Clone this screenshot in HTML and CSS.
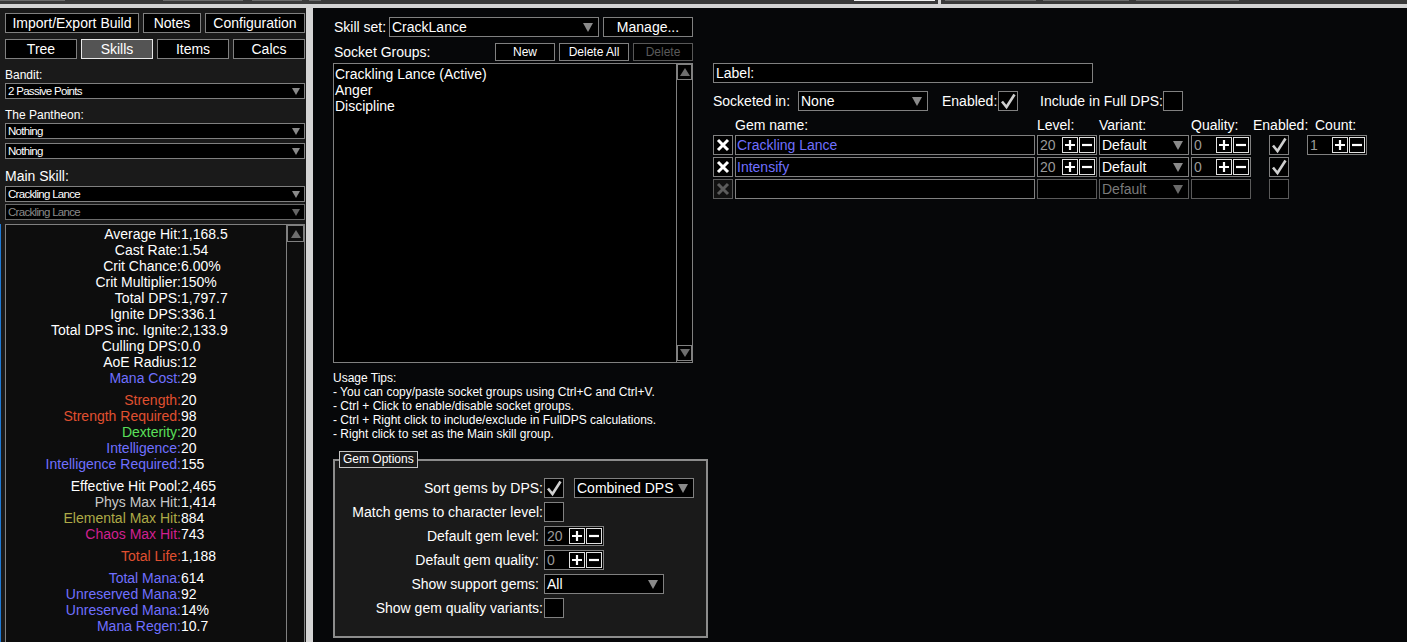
FILE: index.html
```html
<!DOCTYPE html>
<html lang="en">
<head>
<meta charset="utf-8">
<title>Path of Building - Skills</title>
<link rel="stylesheet" href="styles.css">
</head>
<body>
<div class="topbar">
  <span class="stub st1"></span>
  <span class="stub st2"></span>
  <span class="stub st3"></span>
  <span class="stub st4"></span>
  <span class="stub st5 white"></span>
  <span class="tbsep"></span>
  <span class="stub st6"></span>
  <span class="stub st7"></span>
  <span class="stub st8"></span>
</div>
<div class="hline"></div>
<div class="main">
  <aside class="side">
    <div class="row r1">
      <div class="btn b-import">Import/Export Build</div>
      <div class="btn b-notes">Notes</div>
      <div class="btn b-config">Configuration</div>
    </div>
    <div class="row r2">
      <div class="btn tab">Tree</div>
      <div class="btn tab sel">Skills</div>
      <div class="btn tab">Items</div>
      <div class="btn tab">Calcs</div>
    </div>
    <div class="slabel">Bandit:</div>
    <div class="sdrop"><span>2 Passive Points</span><i class="arr"></i></div>
    <div class="slabel">The Pantheon:</div>
    <div class="sdrop"><span>Nothing</span><i class="arr"></i></div>
    <div class="sdrop mt4"><span>Nothing</span><i class="arr"></i></div>
    <div class="slabel big">Main Skill:</div>
    <div class="sdrop mt1"><span>Crackling Lance</span><i class="arr"></i></div>
    <div class="sdrop dis mt2"><span>Crackling Lance</span><i class="arr"></i></div>
    <div class="stats">
      <div class="stat-list">
        <span class="k">Average Hit:</span><span class="v">1,168.5</span>
        <span class="k">Cast Rate:</span><span class="v">1.54</span>
        <span class="k">Crit Chance:</span><span class="v">6.00%</span>
        <span class="k">Crit Multiplier:</span><span class="v">150%</span>
        <span class="k">Total DPS:</span><span class="v">1,797.7</span>
        <span class="k">Ignite DPS:</span><span class="v">336.1</span>
        <span class="k">Total DPS inc. Ignite:</span><span class="v">2,133.9</span>
        <span class="k">Culling DPS:</span><span class="v">0.0</span>
        <span class="k">AoE Radius:</span><span class="v">12</span>
        <span class="k mana">Mana Cost:</span><span class="v">29</span>
        <span class="gap"></span>
        <span class="k str">Strength:</span><span class="v">20</span>
        <span class="k str">Strength Required:</span><span class="v">98</span>
        <span class="k dex">Dexterity:</span><span class="v">20</span>
        <span class="k int">Intelligence:</span><span class="v">20</span>
        <span class="k int">Intelligence Required:</span><span class="v">155</span>
        <span class="gap"></span>
        <span class="k">Effective Hit Pool:</span><span class="v">2,465</span>
        <span class="k phys">Phys Max Hit:</span><span class="v">1,414</span>
        <span class="k ele">Elemental Max Hit:</span><span class="v">884</span>
        <span class="k chaos">Chaos Max Hit:</span><span class="v">743</span>
        <span class="gap"></span>
        <span class="k life">Total Life:</span><span class="v">1,188</span>
        <span class="gap"></span>
        <span class="k mana">Total Mana:</span><span class="v">614</span>
        <span class="k mana">Unreserved Mana:</span><span class="v">92</span>
        <span class="k mana">Unreserved Mana:</span><span class="v">14%</span>
        <span class="k mana">Mana Regen:</span><span class="v">10.7</span>
      </div>
      <div class="vscroll">
        <div class="sbtn"><i class="tri-up"></i></div>
      </div>
    </div>
  </aside>
  <div class="vsep"></div>
  <section class="content">
    <div class="col-left">
      <div class="ssrow">
        <span class="ss-label">Skill set:</span>
        <div class="dd dd-skillset"><span>CrackLance</span><i class="arr big"></i></div>
        <div class="btn b-manage">Manage...</div>
      </div>
      <div class="sgrow">
        <span class="sg-label">Socket Groups:</span>
        <div class="btn small b-new">New</div>
        <div class="btn small b-delall">Delete All</div>
        <div class="btn small b-del disabled">Delete</div>
      </div>
      <div class="list">
        <div class="list-items">
          <div>Crackling Lance (Active)</div>
          <div>Anger</div>
          <div>Discipline</div>
        </div>
        <div class="lscroll">
          <div class="sbtn"><i class="tri-up"></i></div>
          <div class="sbtn"><i class="tri-down"></i></div>
        </div>
      </div>
      <div class="tips">
        <div>Usage Tips:</div>
        <div>- You can copy/paste socket groups using Ctrl+C and Ctrl+V.</div>
        <div>- Ctrl + Click to enable/disable socket groups.</div>
        <div>- Ctrl + Right click to include/exclude in FullDPS calculations.</div>
        <div>- Right click to set as the Main skill group.</div>
      </div>
      <div class="gemopts">
        <div class="legend">Gem Options</div>
        <div class="opt-grid">
          <span class="olabel">Sort gems by DPS:</span>
          <div class="octl">
            <div class="chk"><svg viewBox="0 0 18 18" width="18" height="18"><path d="M3 9.5 L7.5 15 L15.5 2.5" fill="none" stroke="#cfcfcf" stroke-width="2.6" stroke-linejoin="miter"/></svg></div>
            <div class="dd dd-combined"><span>Combined DPS</span><i class="arr big"></i></div>
          </div>
          <span class="olabel">Match gems to character level:</span>
          <div class="octl"><div class="chk"></div></div>
          <span class="olabel sp">Default gem level:</span>
          <div class="octl">
            <div class="num w60"><span class="nv">20</span><span class="pm"><svg viewBox="0 0 14 14" width="14" height="14"><path d="M2 7H12M7 2V12" stroke="#fff" stroke-width="2.2"/></svg></span><span class="pm"><svg viewBox="0 0 14 14" width="14" height="14"><path d="M2 7H12" stroke="#fff" stroke-width="2.2"/></svg></span></div>
          </div>
          <span class="olabel sp">Default gem quality:</span>
          <div class="octl">
            <div class="num w60"><span class="nv">0</span><span class="pm"><svg viewBox="0 0 14 14" width="14" height="14"><path d="M2 7H12M7 2V12" stroke="#fff" stroke-width="2.2"/></svg></span><span class="pm"><svg viewBox="0 0 14 14" width="14" height="14"><path d="M2 7H12" stroke="#fff" stroke-width="2.2"/></svg></span></div>
          </div>
          <span class="olabel sp">Show support gems:</span>
          <div class="octl"><div class="dd dd-support"><span>All</span><i class="arr big"></i></div></div>
          <span class="olabel">Show gem quality variants:</span>
          <div class="octl"><div class="chk"></div></div>
        </div>
      </div>
    </div>
    <div class="col-right">
      <div class="labelinput">Label:</div>
      <div class="sockrow">
        <span class="sock-label">Socketed in:</span>
        <div class="dd dd-socket"><span>None</span><i class="arr big"></i></div>
        <span class="en-label">Enabled:</span>
        <div class="chk"><svg viewBox="0 0 18 18" width="18" height="18"><path d="M3 9.5 L7.5 15 L15.5 2.5" fill="none" stroke="#cfcfcf" stroke-width="2.6"/></svg></div>
        <span class="inc-label">Include in Full DPS:</span>
        <div class="chk"></div>
      </div>
      <div class="gems">
        <span class="gh"></span>
        <span class="gh">Gem name:</span>
        <span class="gh">Level:</span>
        <span class="gh">Variant:</span>
        <span class="gh">Quality:</span>
        <span class="gh">Enabled:</span>
        <span class="gh">Count:</span>

        <div class="xbtn"><svg viewBox="0 0 18 18" width="18" height="18"><path d="M4 4L14 14M14 4L4 14" stroke="#fff" stroke-width="3"/></svg></div>
        <div class="gname">Crackling Lance</div>
        <div class="num"><span class="nv">20</span><span class="pm"><svg viewBox="0 0 14 14" width="14" height="14"><path d="M2 7H12M7 2V12" stroke="#fff" stroke-width="2.2"/></svg></span><span class="pm"><svg viewBox="0 0 14 14" width="14" height="14"><path d="M2 7H12" stroke="#fff" stroke-width="2.2"/></svg></span></div>
        <div class="dd"><span>Default</span><i class="arr big"></i></div>
        <div class="num"><span class="nv">0</span><span class="pm"><svg viewBox="0 0 14 14" width="14" height="14"><path d="M2 7H12M7 2V12" stroke="#fff" stroke-width="2.2"/></svg></span><span class="pm"><svg viewBox="0 0 14 14" width="14" height="14"><path d="M2 7H12" stroke="#fff" stroke-width="2.2"/></svg></span></div>
        <div class="chk gchk"><svg viewBox="0 0 18 18" width="18" height="18"><path d="M3 9.5 L7.5 15 L15.5 2.5" fill="none" stroke="#cfcfcf" stroke-width="2.6"/></svg></div>
        <div class="num gcount"><span class="nv">1</span><span class="pm"><svg viewBox="0 0 14 14" width="14" height="14"><path d="M2 7H12M7 2V12" stroke="#fff" stroke-width="2.2"/></svg></span><span class="pm"><svg viewBox="0 0 14 14" width="14" height="14"><path d="M2 7H12" stroke="#fff" stroke-width="2.2"/></svg></span></div>

        <div class="xbtn"><svg viewBox="0 0 18 18" width="18" height="18"><path d="M4 4L14 14M14 4L4 14" stroke="#fff" stroke-width="3"/></svg></div>
        <div class="gname">Intensify</div>
        <div class="num"><span class="nv">20</span><span class="pm"><svg viewBox="0 0 14 14" width="14" height="14"><path d="M2 7H12M7 2V12" stroke="#fff" stroke-width="2.2"/></svg></span><span class="pm"><svg viewBox="0 0 14 14" width="14" height="14"><path d="M2 7H12" stroke="#fff" stroke-width="2.2"/></svg></span></div>
        <div class="dd"><span>Default</span><i class="arr big"></i></div>
        <div class="num"><span class="nv">0</span><span class="pm"><svg viewBox="0 0 14 14" width="14" height="14"><path d="M2 7H12M7 2V12" stroke="#fff" stroke-width="2.2"/></svg></span><span class="pm"><svg viewBox="0 0 14 14" width="14" height="14"><path d="M2 7H12" stroke="#fff" stroke-width="2.2"/></svg></span></div>
        <div class="chk gchk"><svg viewBox="0 0 18 18" width="18" height="18"><path d="M3 9.5 L7.5 15 L15.5 2.5" fill="none" stroke="#cfcfcf" stroke-width="2.6"/></svg></div>
        <span class="empty"></span>

        <div class="xbtn off"><svg viewBox="0 0 18 18" width="18" height="18"><path d="M4 4L14 14M14 4L4 14" stroke="#5c5c5c" stroke-width="3"/></svg></div>
        <div class="gname"></div>
        <div class="num off"></div>
        <div class="dd off"><span>Default</span><i class="arr big"></i></div>
        <div class="num off"></div>
        <div class="chk gchk off"></div>
        <span class="empty"></span>
      </div>
    </div>
  </section>
</div>
</body>
</html>
```

FILE: styles.css
```css
* { box-sizing: border-box; }
html, body { margin: 0; padding: 0; }
body {
  width: 1407px;
  height: 642px;
  overflow: hidden;
  background: #060709;
  color: #ffffff;
  font-family: "Liberation Sans", Arial, sans-serif;
  font-size: 14px;
}

/* top strip */
.topbar { height: 4px; background: #3a3a3a; display: flex; align-items: flex-start; }
.stub { height: 1px; background: #6c6c6c; flex: none; }
.stub.white { background: #f0f0f0; }
.st1 { width: 65px; }
.st2 { width: 80px; margin-left: 98px; }
.st3 { width: 50px; margin-left: 9px; }
.st4 { width: 12px; margin-left: 7px; }
.st5 { width: 81px; margin-left: 533px; }
.tbsep { width: 3px; height: 4px; margin-left: 3px; background: #d4d4d4; flex: none; }
.st6 { width: 91px; margin-left: 4px; }
.st7 { width: 86px; margin-left: 7px; }
.st8 { width: 103px; margin-left: 7px; }
.hline { height: 4px; background: #d4d4d4; }

.main { display: flex; height: 634px; }

/* left side panel */
.side {
  width: 306px;
  flex: none;
  background: #1a1a1a;
  padding: 5px 0 0 5px;
  overflow: hidden;
  position: relative;
}
.side::before {
  content: "";
  position: absolute;
  left: 0;
  top: 216px;
  bottom: 0;
  width: 1px;
  background: #1f7ad6;
}
.vsep { width: 7px; flex: none; background: #d4d4d4; }

.row { display: flex; gap: 4px; }
.r2 { margin-top: 6px; }
.btn {
  height: 20px;
  border: 1px solid #808080;
  background: #000;
  color: #fff;
  font-size: 14px;
  display: flex;
  align-items: center;
  justify-content: center;
  white-space: nowrap;
  flex: none;
}
.b-import { width: 134px; }
.b-notes { width: 58px; }
.b-config { width: 100px; }
.tab { width: 72px; }
.btn.sel { background: #545454; border-color: #e8e8e8; }

.slabel { font-size: 12px; line-height: 16px; height: 16px; margin-top: 8px; color: #fff; }
.slabel.big { font-size: 14px; line-height: 18px; height: 18px; }
.sdrop {
  width: 300px;
  height: 16px;
  border: 1px solid #808080;
  background: #000;
  font-size: 11.5px;
  letter-spacing: -0.7px;
  display: flex;
  align-items: center;
  padding-left: 2px;
  color: #fff;
  white-space: nowrap;
}
.sdrop.dis { color: #8a8a8a; border-color: #6a6a6a; }
.sdrop.dis .arr { border-top-color: #666; }
.mt1 { margin-top: 1px; }
.mt2 { margin-top: 2px; }
.mt4 { margin-top: 4px; }

.arr {
  width: 0; height: 0;
  border-left: 4px solid transparent;
  border-right: 4px solid transparent;
  border-top: 7px solid #8a8a8a;
  margin-left: auto;
  margin-right: 4px;
  flex: none;
}
.arr.big { border-left-width: 5px; border-right-width: 5px; border-top-width: 9px; margin-right: 5px; }

/* stats */
.stats {
  margin-top: 4px;
  width: 300px;
  height: 430px;
  border: 1px solid #808080;
  background: #0d0d0d;
  display: flex;
}
.stat-list {
  flex: 1;
  padding-top: 1px;
  display: grid;
  grid-template-columns: 175px auto;
  align-content: start;
  font-size: 14px;
  line-height: 16px;
  white-space: nowrap;
}
.stat-list .k { text-align: right; color: #fff; }
.stat-list .v { color: #fff; }
.stat-list .gap { grid-column: 1 / 3; height: 6px; }
.k.mana, .k.int { color: #7070ff; }
.k.str, .k.life { color: #e05030; }
.k.dex { color: #5ae05a; }
.k.phys { color: #c8c8c8; }
.k.ele { color: #adaa47; }
.k.chaos { color: #d02090; }

.vscroll { width: 18px; border-left: 1px solid #808080; flex: none; }
.sbtn {
  height: 17px;
  border: 1px solid #808080;
  display: flex;
  align-items: center;
  justify-content: center;
}
.tri-up { width: 0; height: 0; border-left: 5px solid transparent; border-right: 5px solid transparent; border-bottom: 8px solid #6e6e6e; }
.tri-down { width: 0; height: 0; border-left: 5px solid transparent; border-right: 5px solid transparent; border-top: 8px solid #6e6e6e; }

/* content */
.content { flex: 1; display: flex; gap: 5px; padding: 9px 0 0 20px; }
.col-left { width: 375px; flex: none; }
.col-right { padding-top: 46px; }

.ssrow { display: flex; align-items: center; height: 20px; }
.ss-label { width: 56px; font-size: 14px; padding-left: 1px; }
.dd {
  height: 20px;
  border: 1px solid #808080;
  background: #000;
  display: flex;
  align-items: center;
  padding-left: 2px;
  font-size: 14px;
  color: #fff;
  white-space: nowrap;
}
.dd-skillset { width: 210px; }
.b-manage { width: 90px; margin-left: 4px; }

.sgrow { display: flex; align-items: center; width: 360px; height: 18px; margin-top: 6px; gap: 4px; }
.sg-label { flex: 1; padding-left: 1px; }
.btn.small { height: 18px; font-size: 12px; }
.b-new { width: 60px; }
.b-delall { width: 70px; }
.b-del { width: 60px; }
.btn.disabled { color: #5a5a5a; border-color: #585858; }

.list {
  margin-top: 2px;
  width: 360px;
  height: 300px;
  border: 1px solid #808080;
  background: #000;
  display: flex;
}
.list-items { flex: 1; padding: 2px 0 0 1px; font-size: 14px; line-height: 16px; }
.lscroll {
  width: 16px;
  border-left: 1px solid #808080;
  display: flex;
  flex-direction: column;
  justify-content: space-between;
  padding: 0 0 1px 0;
}
.lscroll .sbtn { height: 16px; margin-top: 0; }

.tips { margin-top: 8px; font-size: 12px; line-height: 14px; }

.gemopts {
  margin-top: 18px;
  width: 375px;
  height: 179px;
  border: 2px solid #8c8c8c;
  background: #1a1a1a;
  position: relative;
  padding-top: 17px;
}
.legend {
  position: absolute;
  top: -10px;
  left: 4px;
  height: 17px;
  line-height: 15px;
  padding: 0 3px;
  border: 1px solid #c4c4c4;
  background: #1a1a1a;
  font-size: 12px;
}
.opt-grid {
  display: grid;
  grid-template-columns: 209px auto;
  row-gap: 4px;
  align-items: center;
}
.olabel { text-align: right; padding-right: 1px; font-size: 14px; white-space: nowrap; line-height: 20px; }
.olabel.sp { padding-right: 5px; }
.octl { display: flex; align-items: center; height: 20px; }
.chk {
  width: 20px;
  height: 20px;
  border: 1px solid #808080;
  background: #000;
  flex: none;
  display: flex;
  align-items: center;
  justify-content: center;
}
.dd-combined { width: 120px; margin-left: 10px; }
.dd-support { width: 120px; }

.num {
  width: 60px;
  height: 20px;
  border: 1px solid #808080;
  background: #000;
  display: flex;
  align-items: center;
  padding: 0 1px 0 2px;
  gap: 1px;
}
.num .nv { flex: 1; color: #9a9a9a; font-size: 14px; }
.pm {
  width: 16px;
  height: 16px;
  border: 1px solid #e0e0e0;
  background: #000;
  display: flex;
  align-items: center;
  justify-content: center;
  flex: none;
}
.pm svg { display: block; }
.chk svg, .xbtn svg { display: block; }

/* right column */
.labelinput {
  width: 380px;
  height: 20px;
  border: 1px solid #808080;
  background: #000;
  padding-left: 2px;
  line-height: 18px;
  font-size: 14px;
}
.sockrow { display: flex; align-items: center; height: 20px; margin-top: 8px; }
.sock-label { width: 85px; }
.dd-socket { width: 130px; }
.en-label { margin-left: 14px; width: 56px; }
.inc-label { margin-left: 22px; width: 123px; }

.gems {
  margin-top: 6px;
  display: grid;
  grid-template-columns: 20px 300px 60px 90px 60px 60px 60px;
  grid-template-rows: 16px 20px 20px 20px;
  column-gap: 2px;
  row-gap: 2px;
}
.gh { font-size: 14px; line-height: 16px; white-space: nowrap; }
.xbtn {
  width: 20px;
  height: 20px;
  border: 1px solid #808080;
  background: #000;
  display: flex;
  align-items: center;
  justify-content: center;
}
.xbtn.off { border-color: #5c5c5c; background: #111; }
.gname {
  height: 20px;
  border: 1px solid #808080;
  background: #000;
  color: #7070ff;
  padding-left: 1px;
  line-height: 18px;
  font-size: 14px;
}
.num.off { border-color: #5a5a5a; }
.dd.off { color: #7a7a7a; border-color: #5a5a5a; }
.dd.off .arr { border-top-color: #6a6a6a; }
.gchk { margin-left: 16px; }
.chk.off { border-color: #5a5a5a; }
.gcount { margin-left: -8px; }
```
